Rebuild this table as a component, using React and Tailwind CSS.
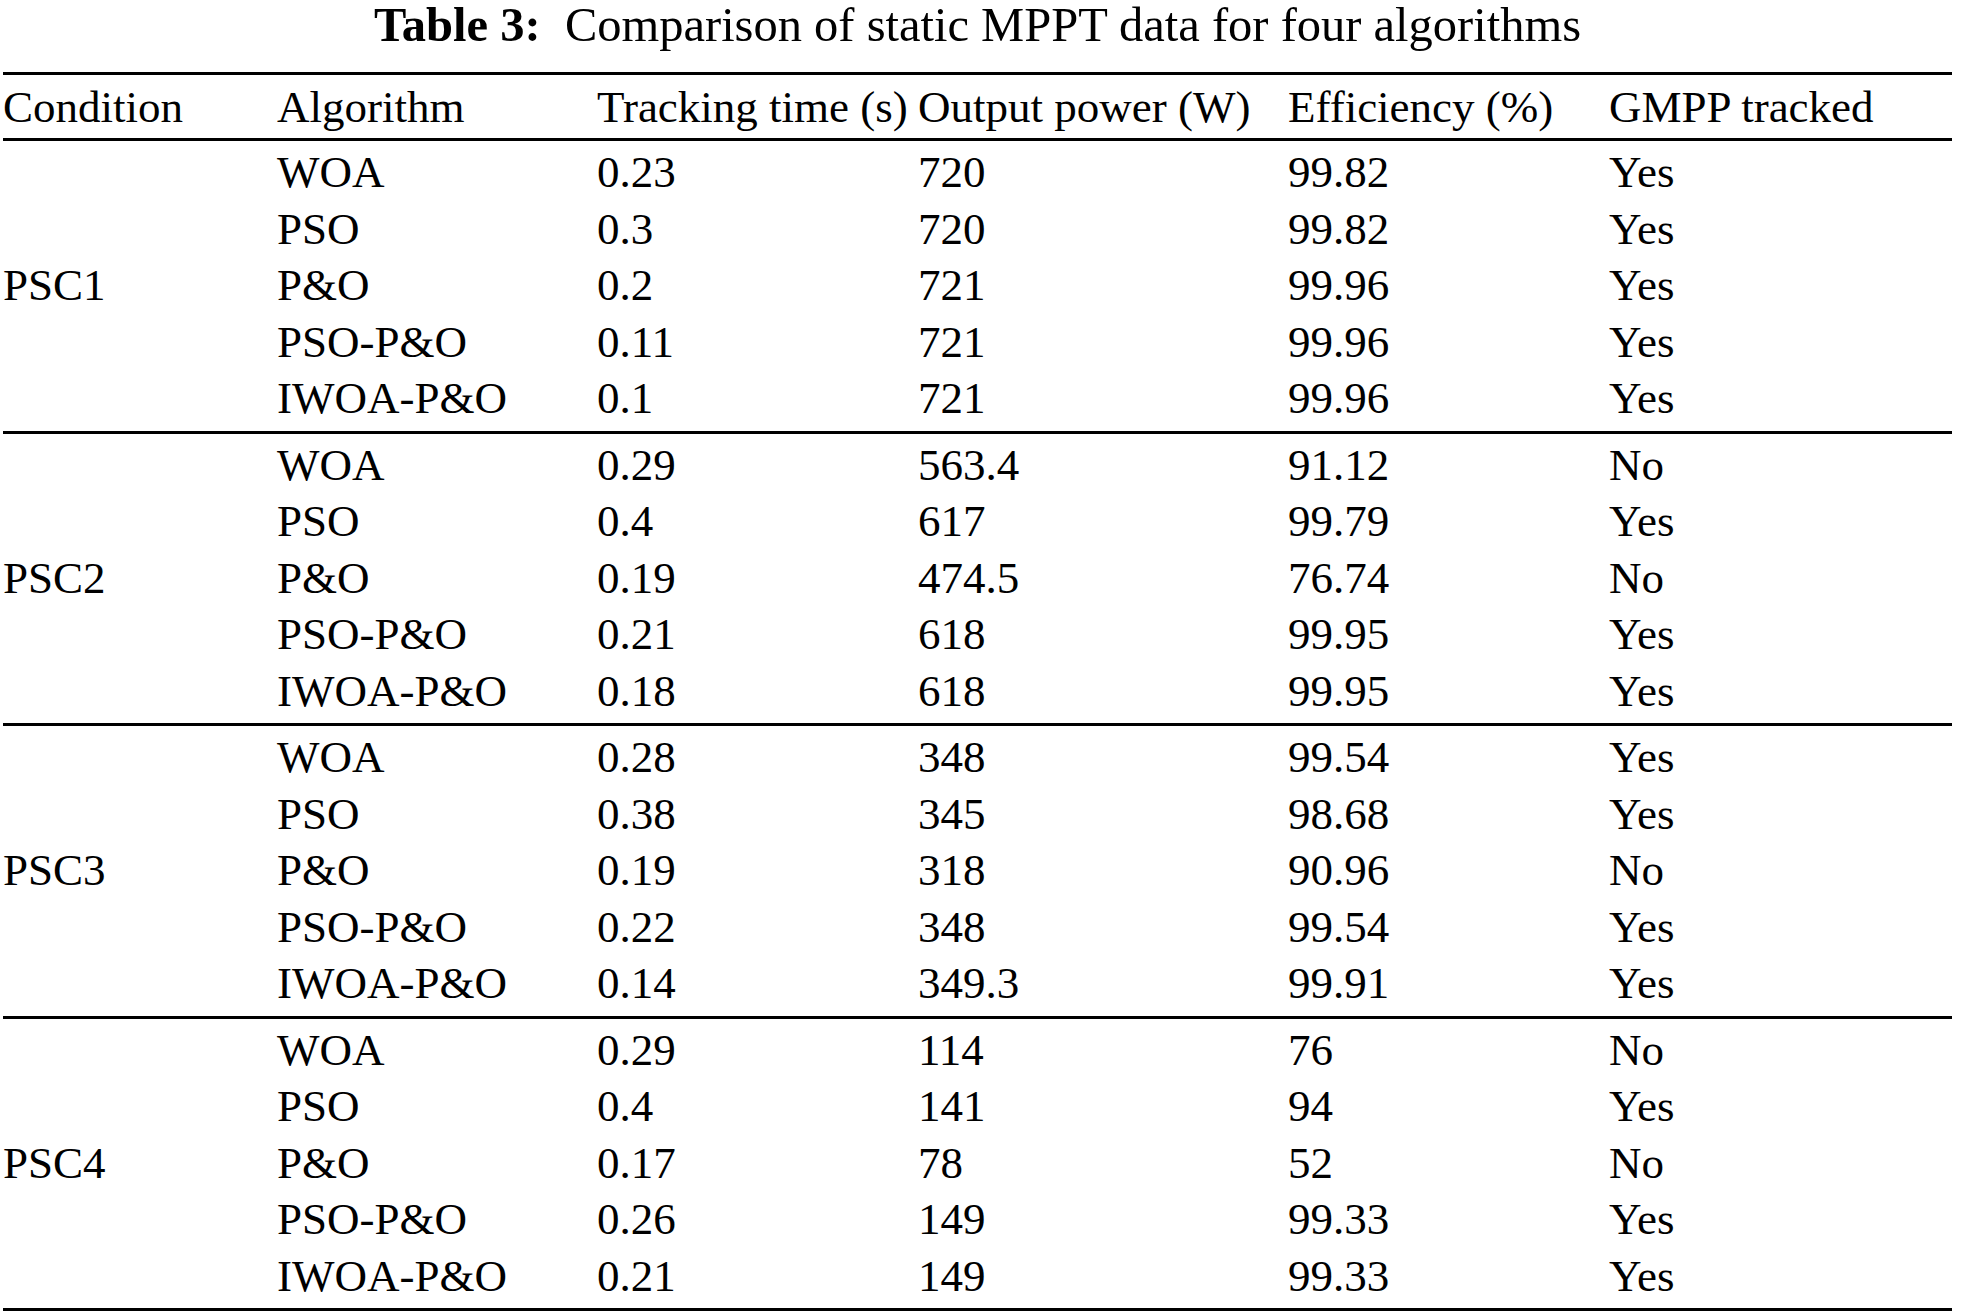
const groups = [
  {
    condition: "PSC1",
    rows: [
      ["WOA", "0.23", "720", "99.82", "Yes"],
      ["PSO", "0.3", "720", "99.82", "Yes"],
      ["P&O", "0.2", "721", "99.96", "Yes"],
      ["PSO-P&O", "0.11", "721", "99.96", "Yes"],
      ["IWOA-P&O", "0.1", "721", "99.96", "Yes"],
    ],
  },
  {
    condition: "PSC2",
    rows: [
      ["WOA", "0.29", "563.4", "91.12", "No"],
      ["PSO", "0.4", "617", "99.79", "Yes"],
      ["P&O", "0.19", "474.5", "76.74", "No"],
      ["PSO-P&O", "0.21", "618", "99.95", "Yes"],
      ["IWOA-P&O", "0.18", "618", "99.95", "Yes"],
    ],
  },
  {
    condition: "PSC3",
    rows: [
      ["WOA", "0.28", "348", "99.54", "Yes"],
      ["PSO", "0.38", "345", "98.68", "Yes"],
      ["P&O", "0.19", "318", "90.96", "No"],
      ["PSO-P&O", "0.22", "348", "99.54", "Yes"],
      ["IWOA-P&O", "0.14", "349.3", "99.91", "Yes"],
    ],
  },
  {
    condition: "PSC4",
    rows: [
      ["WOA", "0.29", "114", "76", "No"],
      ["PSO", "0.4", "141", "94", "Yes"],
      ["P&O", "0.17", "78", "52", "No"],
      ["PSO-P&O", "0.26", "149", "99.33", "Yes"],
      ["IWOA-P&O", "0.21", "149", "99.33", "Yes"],
    ],
  },
];

const headers = [
  "Condition",
  "Algorithm",
  "Tracking time (s)",
  "Output power (W)",
  "Efficiency (%)",
  "GMPP tracked",
];

const cols = "grid grid-cols-[274px_320px_321px_370px_321px_1fr]";

export default function App() {
  return (
    <div className="w-[1967px] h-[1312px] bg-white text-black font-['Liberation_Serif','Times_New_Roman',serif]">
      <div className="ml-[3px] w-[1949px]">
        {/* Caption */}
        <div className="h-[72px] text-center text-[48.5px] leading-[50px] whitespace-pre">
          <span className="font-bold">Table 3:</span>
          {"  "}Comparison of static MPPT data for four algorithms
        </div>

        {/* Top rule */}
        <div className="h-[3px] bg-black" />

        {/* Header */}
        <div className={`${cols} h-[63px] items-center text-[45px] leading-[56px]`}>
          {headers.map((h) => (
            <div key={h} className="whitespace-nowrap">
              {h}
            </div>
          ))}
        </div>
        <div className="h-[3px] bg-black" />

        {/* Body */}
        {groups.map((g) => (
          <div key={g.condition}>
            <div className="pt-[3px] pb-[4px]">
              {g.rows.map((r, i) => (
                <div
                  key={r[0]}
                  className={`${cols} h-[56.5px] items-center text-[45px] leading-[56px]`}
                >
                  <div>{i === 2 ? g.condition : ""}</div>
                  {r.map((c, j) => (
                    <div key={j} className="whitespace-nowrap">
                      {c}
                    </div>
                  ))}
                </div>
              ))}
            </div>
            <div className="h-[3px] bg-black" />
          </div>
        ))}
      </div>
    </div>
  );
}
